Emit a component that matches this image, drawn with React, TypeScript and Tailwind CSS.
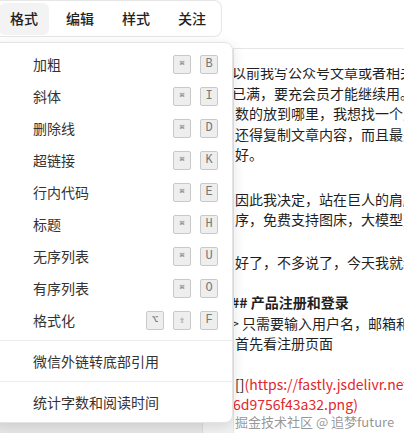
import React from "react";

const Kbd = ({ k, size }: { k: string; size: string }) => (
  <span
    className={`flex h-[19px] w-[18px] items-center justify-center rounded-[2px] border border-[#c9c9c9] bg-[#eeeeee] font-['Liberation_Mono',monospace] text-[#777] ${size}`}
  >
    {k}
  </span>
);

const items: { label: string; keys: string[] }[] = [
  { label: "加粗", keys: ["⌘", "B"] },
  { label: "斜体", keys: ["⌘", "I"] },
  { label: "删除线", keys: ["⌘", "D"] },
  { label: "超链接", keys: ["⌘", "K"] },
  { label: "行内代码", keys: ["⌘", "E"] },
  { label: "标题", keys: ["⌘", "H"] },
  { label: "无序列表", keys: ["⌘", "U"] },
  { label: "有序列表", keys: ["⌘", "O"] },
  { label: "格式化", keys: ["⌥", "⇧", "F"] },
];

const keySize = (k: string) => {
  if (k === "⌘") return "text-[8px]";
  if (k === "⌥") return "text-[11px] font-['DejaVu_Sans',sans-serif]";
  if (k === "⇧") return "text-[10px] font-['DejaVu_Sans',sans-serif]";
  return "text-[12px]";
};

const tabs = ["格式", "编辑", "样式", "关注"];

const App = () => {
  return (
    <div className="relative h-[433px] w-[404px] overflow-hidden bg-white font-['Noto_Sans_CJK_SC',sans-serif] text-[14px] text-[#1f1f1f]">
      {/* tab bar */}
      <div className="ml-[-1px] flex h-[37px] w-[223px] items-center gap-[6px] rounded-r-lg border border-l-0 border-[#e6e6e6] pr-[4px]">
        {tabs.map((t, i) => (
          <div
            key={t}
            className={`flex h-[32px] w-[50px] items-center justify-center rounded-md text-[14px] font-medium text-[#222] ${
              i === 0 ? "bg-[#f3f3f3]" : ""
            }`}
          >
            {t}
          </div>
        ))}
      </div>

      {/* page below */}
      <div className="mt-[11px] flex h-[385px]">
        <div className="flex w-[233px] shrink-0 justify-start bg-[#f3f3f3]">
          <div className="h-full w-[203px] border-r border-[#dcdcdc] bg-[#e8e8e8]" />
        </div>
        <div className="min-w-0 flex-1 border-l border-t border-[#e6e6e6]">
          <div className="mt-[19px] h-[366px] overflow-hidden">
            <div className="-mt-[6px] whitespace-nowrap pl-[1px] leading-[20.5px]">
              <div className="-ml-[3px]">以前我写公众号文章或者相关的技术文章</div>
              <div className="-ml-[3px]">已满，要充会员才能继续用。</div>
              <div>数的放到哪里，我想找一个之类</div>
              <div>还得复制文章内容，而且最关键</div>
              <div>好。</div>
              <div className="h-[24px]" />
              <div>因此我决定，站在巨人的肩膀上</div>
              <div>序，免费支持图床，大模型对话</div>
              <div className="h-[22px]" />
              <div>好了，不多说了，今天我就给大家</div>
              <div className="h-[20px]" />
              <div className="-ml-[4px] font-bold">## 产品注册和登录</div>
              <div className="-ml-[4px]">&gt; 只需要输入用户名，邮箱和密码</div>
              <div>首先看注册页面</div>
              <div className="h-[20px]" />
              <div>
                []<span className="text-[#e3262b]">(https://fastly.jsdelivr.net/gh/</span>
              </div>
              <div className="-ml-[2px] text-[#e3262b]">6d9756f43a32.png)</div>
            </div>
          </div>
        </div>
      </div>

      {/* dropdown menu */}
      <div className="absolute left-[-8px] top-[42px] w-[241px] rounded-lg border border-[#e4e4e4] bg-white pt-[5px] text-[#333] shadow-[0_4px_14px_rgba(0,0,0,0.12)]">
        {items.map((it) => (
          <div key={it.label} className="flex h-[32px] items-center justify-between pl-[40px] pr-[14px]">
            <span>{it.label}</span>
            <div className="flex gap-[9px]">
              {it.keys.map((k) => (
                <Kbd key={k} k={k} size={keySize(k)} />
              ))}
            </div>
          </div>
        ))}
        <div className="mt-[4px] border-t border-[#ececec]" />
        <div className="flex h-[40px] items-center pl-[40px]">微信外链转底部引用</div>
        <div className="border-t border-[#ececec]" />
        <div className="flex h-[40px] items-center pl-[40px]">统计字数和阅读时间</div>
      </div>

      {/* watermark */}
      <div className="absolute left-[235px] top-[412px] whitespace-nowrap text-[13px] text-[#8a8a8a]/90 [text-shadow:0_0_2px_#fff]">
        掘金技术社区 @ 追梦future
      </div>
    </div>
  );
};

export default App;
